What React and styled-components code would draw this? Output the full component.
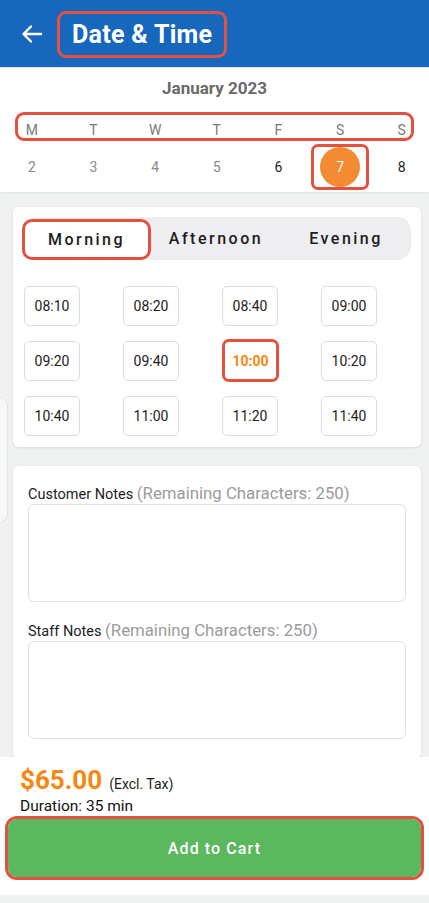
import styled, { createGlobalStyle, css } from 'styled-components';

const GlobalStyle = createGlobalStyle`
  html, body {
    margin: 0;
    padding: 0;
    background: #f0f1f1;
    font-family: Roboto, 'Liberation Sans', sans-serif;
  }
  * { box-sizing: border-box; }
`;

const Page = styled.div`
  width: 429px;
  height: 903px;
  display: flex;
  flex-direction: column;
  overflow: hidden;
  position: relative;
  background: #f0f1f1;
`;

const Header = styled.header`
  height: 68px;
  flex: none;
  background: #1767bd;
  border-bottom: 1px solid #dfe3e8;
  display: flex;
  align-items: center;
  padding: 0 0 0 21px;
  gap: 14px;
`;

const BackButton = styled.button`
  border: 0;
  background: transparent;
  padding: 0;
  width: 22px;
  height: 20px;
  display: flex;
  color: #fff;
  cursor: pointer;
`;

const Highlight = styled.div`
  border: 3px solid #e4513f;
  border-radius: ${(p) => p.$radius || 8}px;
`;

const TitleBox = styled(Highlight)`
  height: 47px;
  display: flex;
  align-items: center;
  padding: 0 12px;
  margin-top: 2px;
`;

const Title = styled.h1`
  margin: 0;
  color: #fff;
  font-size: 25px;
  font-weight: 700;
  letter-spacing: 0.3px;
`;

const Calendar = styled.section`
  flex: none;
  height: 124px;
  background: #fff;
  box-shadow: 0 1px 2px rgba(0, 0, 0, 0.08);
  display: flex;
  flex-direction: column;
`;

const Month = styled.div`
  text-align: center;
  color: #6a6a6a;
  font-size: 17px;
  font-weight: 700;
  margin-top: 10px;
  height: 20px;
  line-height: 20px;
`;

const WeekBox = styled(Highlight)`
  margin: 14px 15px 0;
  height: 29px;
  border-radius: 9px;
`;

const DayGrid = styled.div`
  display: grid;
  grid-template-columns: repeat(7, 61.67px);
  padding-left: 1px;
  align-items: center;
  justify-items: center;
  ${(p) =>
    p.$inner &&
    css`
      margin: 0 -18px;
      height: 23px;
    `}
  ${(p) =>
    p.$dates &&
    css`
      height: 46px;
      margin-top: 3px;
    `}
`;

const Weekday = styled.span`
  color: #7a7a7a;
  font-size: 14px;
  padding-top: 6px;
`;

const DateCell = styled.span`
  font-size: 14px;
  color: ${(p) => (p.$past ? '#8a8a8a' : '#1d1d1d')};
`;

const SelectedDateBox = styled(Highlight)`
  width: 58px;
  height: 46px;
  display: flex;
  align-items: center;
  justify-content: center;
  border-radius: 7px;
`;

const DateCircle = styled.span`
  width: 40px;
  height: 40px;
  border-radius: 50%;
  background: #f48b33;
  color: #fff;
  font-size: 14px;
  display: flex;
  align-items: center;
  justify-content: center;
`;

const Scroll = styled.main`
  flex: 1;
  overflow: hidden;
  padding: 15px 8px 0 13px;
  display: flex;
  flex-direction: column;
  gap: 19px;
`;

const Card = styled.div`
  background: #fff;
  border-radius: 6px;
  box-shadow: 0 1px 3px rgba(0, 0, 0, 0.1);
  flex: none;
  ${(p) =>
    p.$slots &&
    css`
      padding: 10px 10px 11px 9px;
    `}
  ${(p) =>
    p.$notes &&
    css`
      padding: 18px 15px 20px 15px;
    `}
`;

const Segments = styled.div`
  height: 43px;
  background: #eeeef0;
  border-radius: 14px;
  display: grid;
  grid-template-columns: 129px 1fr 1fr;
  align-items: center;
`;

const Segment = styled.div`
  height: ${(p) => (p.$active ? '41px' : 'auto')};
  margin-top: ${(p) => (p.$active ? '2px' : '0')};
  display: flex;
  align-items: center;
  justify-content: center;
  font-size: 16px;
  font-weight: 500;
  letter-spacing: 2.5px;
  color: #1c1c1c;
  ${(p) =>
    p.$active &&
    css`
      background: #fff;
      border: 3px solid #e4513f;
      border-radius: 10px;
    `}
`;

const SlotGrid = styled.div`
  display: grid;
  grid-template-columns: repeat(4, 99px);
  row-gap: 15px;
  padding-left: 2px;
  margin-top: 26px;
`;

const Slot = styled.div`
  width: 56px;
  height: 40px;
  border: 1px solid #d9dde6;
  border-radius: 5px;
  display: flex;
  align-items: center;
  justify-content: center;
  font-size: 14px;
  color: #222;
  ${(p) =>
    p.$active &&
    css`
      border: 3px solid #e4513f;
      border-radius: 7px;
      width: 57px;
      height: 43px;
      margin: -2px 0 -1px;
      color: #f7870f;
      font-weight: 700;
    `}
`;

const Label = styled.div`
  font-size: 14.5px;
  color: #1d1d1d;
  height: 18px;
  line-height: 18px;
  white-space: nowrap;
  ${(p) =>
    p.$second &&
    css`
      margin-top: 19px;
    `}
`;

const Remaining = styled.span`
  color: #9b9b9b;
  font-size: 16.8px;
`;

const Notes = styled.div`
  height: 98px;
  border: 1px solid #dde1ea;
  border-radius: 6px;
  margin-top: 2px;
`;

const Handle = styled.div`
  position: absolute;
  left: -1px;
  top: 397px;
  width: 9px;
  height: 126px;
  background: #f7f8f8;
  border: 1px solid #e3e5e8;
  border-radius: 0 9px 9px 0;
`;

const Footer = styled.footer`
  flex: none;
  background: #fff;
  height: 138px;
  margin-bottom: 8px;
  padding: 8px 5px 0 5px;
  display: flex;
  flex-direction: column;
`;

const PriceRow = styled.div`
  display: flex;
  align-items: baseline;
  gap: 7px;
  padding-left: 15px;
  height: 30px;
`;

const Price = styled.span`
  color: #f7870f;
  font-size: 26px;
  font-weight: 700;
`;

const PriceNote = styled.span`
  font-size: 14px;
  color: #1d1d1d;
`;

const Duration = styled.div`
  font-size: 15.5px;
  line-height: 18px;
  color: #111;
  padding-left: 15px;
  margin-top: 2px;
`;

const CartBox = styled(Highlight)`
  margin-top: 1px;
  border-radius: 12px;
`;

const CartButton = styled.button`
  width: 100%;
  height: 58px;
  border: 0;
  border-radius: 9px;
  background: #5cb85e;
  color: #fff;
  font-family: inherit;
  font-size: 16px;
  font-weight: 500;
  letter-spacing: 1.1px;
  display: block;
`;

const weekdays = ['M', 'T', 'W', 'T', 'F', 'S', 'S'];
const dates = [
  { d: 2, past: true },
  { d: 3, past: true },
  { d: 4, past: true },
  { d: 5, past: true },
  { d: 6 },
  { d: 7, selected: true },
  { d: 8 },
];
const slots = [
  '08:10', '08:20', '08:40', '09:00',
  '09:20', '09:40', '10:00', '10:20',
  '10:40', '11:00', '11:20', '11:40',
];

const App = () => (
  <Page>
    <GlobalStyle />
    <Header>
      <BackButton aria-label="Back">
        <svg width="22" height="20" viewBox="0 0 22 20" fill="none" stroke="currentColor" strokeWidth="2.4" strokeLinecap="round" strokeLinejoin="round">
          <path d="M20 10H2.5M10 2.5L2.5 10L10 17.5" />
        </svg>
      </BackButton>
      <TitleBox $radius={9}>
        <Title>Date &amp; Time</Title>
      </TitleBox>
    </Header>

    <Calendar>
      <Month>January 2023</Month>
      <WeekBox>
        <DayGrid $inner>
          {weekdays.map((w, i) => (
            <Weekday key={i}>{w}</Weekday>
          ))}
        </DayGrid>
      </WeekBox>
      <DayGrid $dates>
        {dates.map((item) =>
          item.selected ? (
            <SelectedDateBox key={item.d}>
              <DateCircle>{item.d}</DateCircle>
            </SelectedDateBox>
          ) : (
            <DateCell key={item.d} $past={item.past}>
              {item.d}
            </DateCell>
          )
        )}
      </DayGrid>
    </Calendar>

    <Scroll>
      <Card $slots>
        <Segments>
          <Segment $active>Morning</Segment>
          <Segment>Afternoon</Segment>
          <Segment>Evening</Segment>
        </Segments>
        <SlotGrid>
          {slots.map((s) => (
            <Slot key={s} $active={s === '10:00'}>
              {s}
            </Slot>
          ))}
        </SlotGrid>
      </Card>
      <Card $notes>
        <Label>
          Customer Notes <Remaining>(Remaining Characters: 250)</Remaining>
        </Label>
        <Notes />
        <Label $second>
          Staff Notes <Remaining>(Remaining Characters: 250)</Remaining>
        </Label>
        <Notes />
      </Card>
    </Scroll>

    <Handle />

    <Footer>
      <PriceRow>
        <Price>$65.00</Price>
        <PriceNote>(Excl. Tax)</PriceNote>
      </PriceRow>
      <Duration>Duration: 35 min</Duration>
      <CartBox>
        <CartButton>Add to Cart</CartButton>
      </CartBox>
    </Footer>
  </Page>
);

export default App;
